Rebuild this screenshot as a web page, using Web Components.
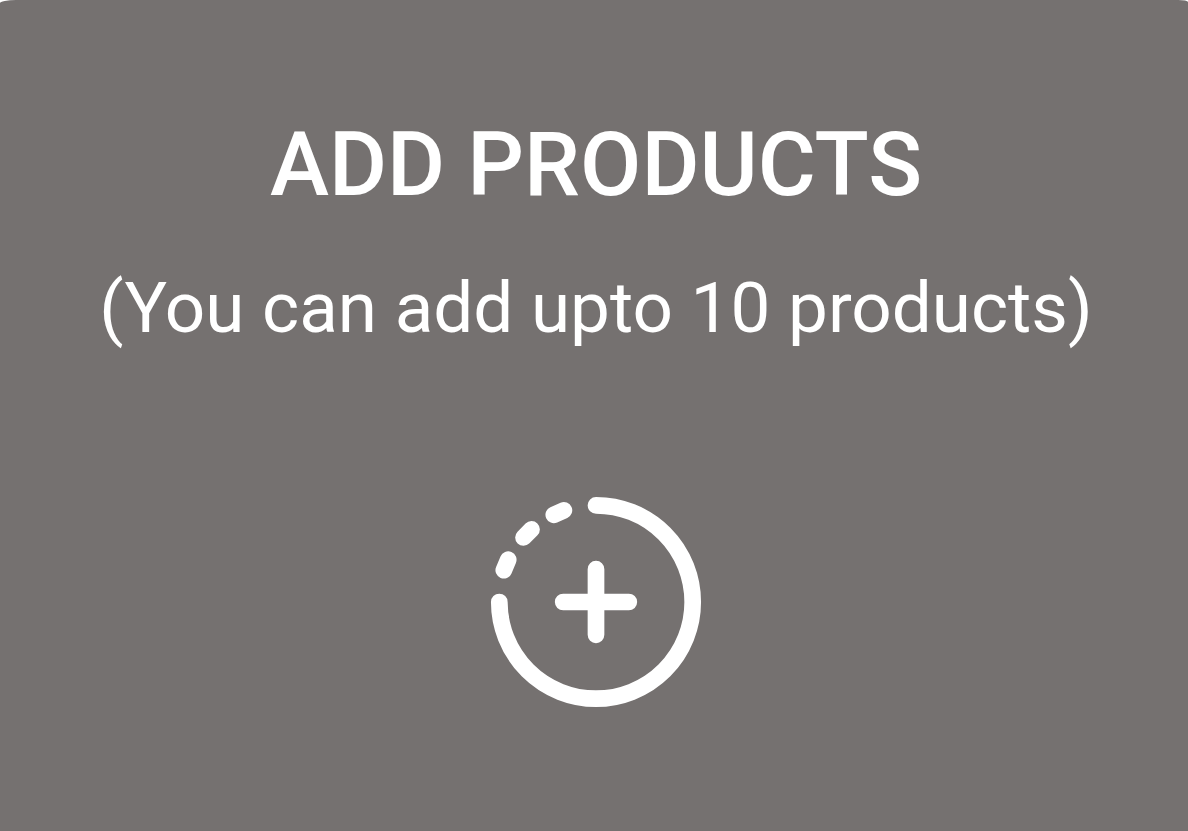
<!DOCTYPE html>
<html lang="en">
<head>
<meta charset="utf-8">
<title>Add products</title>
<style>
html, body { height: 100%; }
body { margin: 0; background: #fff; font-family: Roboto, sans-serif; }
</style>
</head>
<body>
<add-products-card>
  <span slot="title">ADD PRODUCTS</span>
  <span slot="hint">(You can add upto 10 products)</span>
</add-products-card>
<script>
class AddIcon extends HTMLElement {
  constructor() {
    super();
    this.attachShadow({ mode: "open" }).innerHTML = `
      <style>
        :host { display: block; width: 212px; height: 212px; }
        svg { display: block; width: 100%; height: 100%; }
      </style>
      <svg viewBox="0 0 212 212" fill="none" stroke="currentColor" stroke-width="16.700" stroke-linecap="round" aria-hidden="true">
        <path d="M106 9.300A96.700 96.700 0 1 1 9.300 106"/>
        <path d="M13.800 74.200L18.200 63.700M33.500 41.500L41.500 33.400M63.800 18.800L73.900 14.300"/>
        <path d="M106 73.200V138.800M73.200 106H138.800"/>
      </svg>`;
  }
}
customElements.define("add-icon", AddIcon);

class AddProductsCard extends HTMLElement {
  constructor() {
    super();
    this.attachShadow({ mode: "open" }).innerHTML = `
      <style>
        :host { display: block; min-height: 100%; box-sizing: border-box; padding: 112px 24px 112px 28px; border-radius: 16px 10px 0 0 / 3px 2px 0 0; background: #757170; color: #fff; }
        .stack { display: flex; flex-direction: column; align-items: center; text-align: center; }
        h1 { margin: 0; font-size: 89px; line-height: 106px; font-weight: 500; }
        p { margin: 46px 0 0; font-size: 71px; line-height: 88px; font-weight: 400; }
        button { margin: 144px 0 0; padding: 0; border: 0; background: none; color: inherit; cursor: pointer; }
      </style>
      <div class="stack">
        <h1><slot name="title"></slot></h1>
        <p><slot name="hint"></slot></p>
        <button type="button" aria-label="Add product"><add-icon></add-icon></button>
      </div>`;
  }
}
customElements.define("add-products-card", AddProductsCard);
</script>
</body>
</html>
